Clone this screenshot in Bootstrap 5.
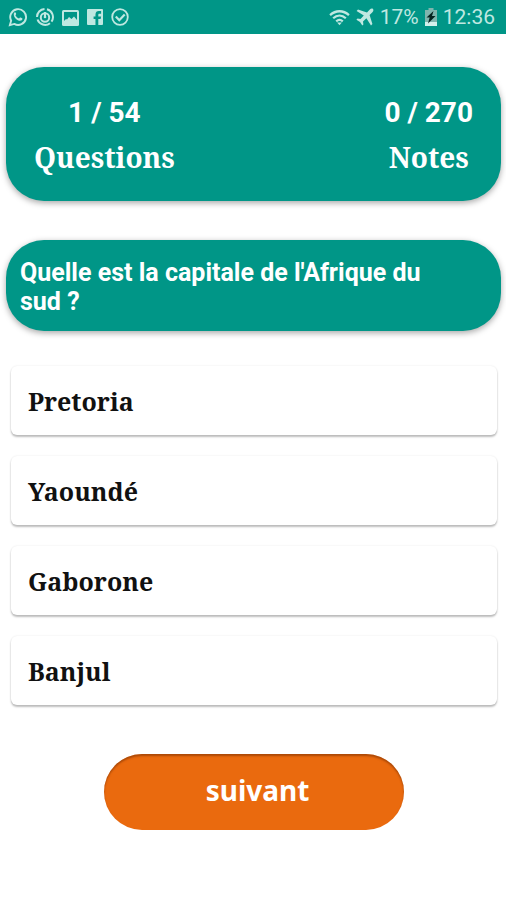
<!DOCTYPE html>
<html lang="fr">
<head>
<meta charset="utf-8">
<meta name="viewport" content="width=device-width, initial-scale=1">
<title>Quiz des capitales</title>
<link href="https://cdn.jsdelivr.net/npm/bootstrap@5.3.0/dist/css/bootstrap.min.css" rel="stylesheet">
<style>
body { font-family: Roboto, sans-serif; background: #fff; color: #111; }
.teal { background: #009687; color: #fff; }
.statusbar { height: 34px; padding: 0 11px 0 8px; font-size: 21px; line-height: 34px; }
.status-group { color: #bfe8e1; gap: 8px; }
.status-group.status-info { gap: 6px; }
.status-group svg { display: block; }
.quiz { padding: 33px 5px 24px 6px; }
.panel { border-radius: 38px; box-shadow: 0 2px 6px rgba(0, 0, 0, .35); }
.score { padding: 24px 28px 22px; }
.figure-value { font-size: 28px; line-height: 44px; font-weight: 700; }
.figure-name, .answer { font-family: "Noto Serif", "Liberation Serif", serif; font-weight: 700; }
.figure-name { font-size: 28px; line-height: 44px; }
.question { margin: 39px 0 35px; padding: 18px 56px 15px 14px; font-size: 25px; line-height: 29px; font-weight: 700; }
.answers { padding: 0 4px 0 5px; gap: 21px; }
.answer { height: 69px; padding: 0 17px; font-size: 25px; line-height: 44px; color: #111; background: #fff; border: 0; border-radius: 6px; box-shadow: 0 2px 2px rgba(0, 0, 0, .25), 0 0 2px rgba(0, 0, 0, .1); }
.next { width: 300px; height: 76px; margin-top: 49px; padding: 0 0 4px 8px; border: 0; border-radius: 38px; background: #ea6a0e; color: #fff; font: 700 28px/40px "Noto Sans", sans-serif; box-shadow: inset 0 2px 2px rgba(120, 45, 0, .55); }
.next:hover { background: #d85f08; color: #fff; }
</style>
</head>
<body>
<header class="statusbar teal d-flex justify-content-between align-items-center">
  <div class="status-group d-flex align-items-center">
    <svg width="20" height="20" viewBox="0 0 21 21" fill="none" stroke="#bfe8e1" stroke-width="2" aria-hidden="true"><path d="M2 19l1.300-4.600A8.300 8.300 0 1 1 6.600 17.800z"/><path d="M6.300 6.200c.8-1.200 1.600-.8 2 .2.500 1.200.3 1.400-.5 2.300.8 1.600 2 2.700 3.800 3.400.9-1.300 1.200-1.300 2.600-.6 1.200.6 1.200.8.800 1.700-.8 1.500-2.800 1.500-4.600.7C7.800 12.700 5.200 9 6.300 6.200z" fill="#bfe8e1" stroke="none"/></svg>
    <svg width="18" height="18" viewBox="0 0 18 18" fill="none" stroke="#bfe8e1" stroke-width="2" aria-hidden="true"><path d="M11 1.300A8 8 0 0 1 15.500 13.600M14 15.200A8 8 0 0 1 1.500 11.500M1 9A8 8 0 0 1 8.500 1"/><circle cx="9" cy="9.500" r="4.200"/><circle cx="9" cy="9" r="1.300" fill="#bfe8e1" stroke="none"/><path d="M9 4v4"/></svg>
    <svg width="17" height="17" viewBox="0 0 17 17" aria-hidden="true"><rect width="17" height="16" y="1" rx="1.500" fill="#bfe8e1"/><path d="M2 3h13v8l-3-3.500L9.500 10 7 8l-2 2.500-1-.5-2 2z" fill="#009687"/></svg>
    <svg width="16" height="16" viewBox="0 0 17 17" aria-hidden="true"><rect width="17" height="17" rx="1" fill="#bfe8e1"/><path d="M9 17v-6.500H7V8h2V6c0-2.600 1.500-3.800 3.500-3.800H15V5h-1.700c-1 0-1.300.5-1.300 1.300V8h3l-.5 2.500H12V17z" fill="#009687"/></svg>
    <svg width="18" height="18" viewBox="0 0 18 18" fill="none" stroke="#bfe8e1" stroke-width="1.800" aria-hidden="true"><circle cx="9" cy="9" r="7.800"/><path d="M4.800 8.500l3.500 3.700 5.400-5.700" stroke-width="2.200"/></svg>
  </div>
  <div class="status-group status-info d-flex align-items-center">
    <svg width="21" height="17" viewBox="0 0 22 18" fill="none" stroke="#bfe8e1" stroke-width="2.400" aria-hidden="true"><path d="M1 6.500C7 1 15 1 21 6.500M4.300 9.800c4-3.600 9.400-3.600 13.400 0M7.500 13c2.200-1.900 4.800-1.900 7 0"/><path d="M8.500 14.200h5L11 17.200z" fill="#bfe8e1" stroke="none"/></svg>
    <svg width="18" height="18" viewBox="0 0 18 18" fill="#bfe8e1" aria-hidden="true"><path d="M17 1c-1-.8-2.300-.3-3.200.6L11 4.400 2 1.600.6 3 7.800 7.600 4.500 11l-3-.4L.4 11.700l3.600 2.300 2.300 3.600 1.100-1.100-.4-3 3.400-3.300L15 17.400l1.400-1.400-2.800-9 2.800-2.800C17.300 3.300 17.800 2 17 1z"/></svg>
    <span>17%</span>
    <svg width="12" height="18" viewBox="0 0 12 18" aria-hidden="true"><path d="M3.500 0h5v2H12v16H0V2h3.500z" fill="#7fb5ae"/><path d="M0 14h12v4H0z" fill="#d2f0eb"/><path d="M8.500 3L1.500 9.500h3.200L3 15.500 10.500 8H7z" fill="#06231f"/></svg>
    <span>12:36</span>
  </div>
</header>

<main class="quiz">
  <section class="panel teal score d-flex justify-content-between text-center" aria-label="Score">
    <div>
      <div class="figure-value">1 / 54</div>
      <div class="figure-name">Questions</div>
    </div>
    <div>
      <div class="figure-value">0 / 270</div>
      <div class="figure-name">Notes</div>
    </div>
  </section>

  <h1 class="panel teal question">Quelle est la capitale de l'Afrique du sud ?</h1>

  <div class="answers d-grid">
    <button type="button" class="answer text-start">Pretoria</button>
    <button type="button" class="answer text-start">Yaoundé</button>
    <button type="button" class="answer text-start">Gaborone</button>
    <button type="button" class="answer text-start">Banjul</button>
  </div>

  <div class="text-center">
    <button type="button" class="btn next">suivant</button>
  </div>
</main>
<script src="https://cdn.jsdelivr.net/npm/bootstrap@5.3.0/dist/js/bootstrap.bundle.min.js"></script>
</body>
</html>
